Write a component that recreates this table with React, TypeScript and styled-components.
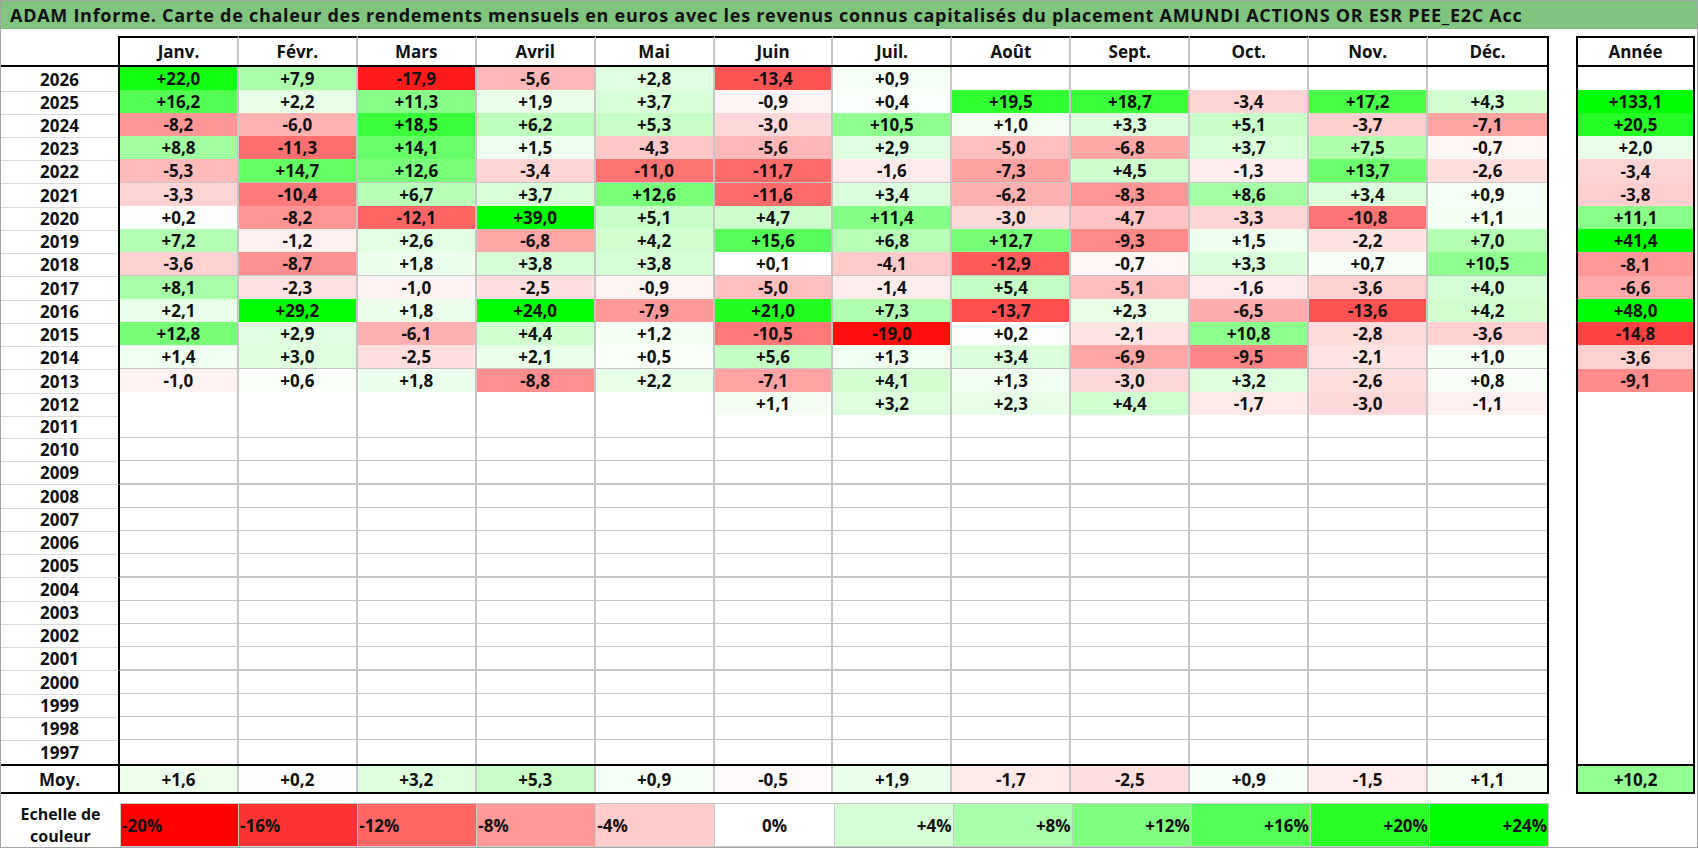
import * as React from "react";
import styled, { createGlobalStyle } from "styled-components";

const MONTHS = ["Janv.", "Févr.", "Mars", "Avril", "Mai", "Juin", "Juil.", "Août", "Sept.", "Oct.", "Nov.", "Déc."];

type Val = number | null;
const _ = null;

// year -> [12 months, annual]
const DATA: Record<number, [Val[], Val]> = {
	2026: [[22.0, 7.9, -17.9, -5.6, 2.8, -13.4, 0.9, _, _, _, _, _], _],
	2025: [[16.2, 2.2, 11.3, 1.9, 3.7, -0.9, 0.4, 19.5, 18.7, -3.4, 17.2, 4.3], 133.1],
	2024: [[-8.2, -6.0, 18.5, 6.2, 5.3, -3.0, 10.5, 1.0, 3.3, 5.1, -3.7, -7.1], 20.5],
	2023: [[8.8, -11.3, 14.1, 1.5, -4.3, -5.6, 2.9, -5.0, -6.8, 3.7, 7.5, -0.7], 2.0],
	2022: [[-5.3, 14.7, 12.6, -3.4, -11.0, -11.7, -1.6, -7.3, 4.5, -1.3, 13.7, -2.6], -3.4],
	2021: [[-3.3, -10.4, 6.7, 3.7, 12.6, -11.6, 3.4, -6.2, -8.3, 8.6, 3.4, 0.9], -3.8],
	2020: [[0.2, -8.2, -12.1, 39.0, 5.1, 4.7, 11.4, -3.0, -4.7, -3.3, -10.8, 1.1], 11.1],
	2019: [[7.2, -1.2, 2.6, -6.8, 4.2, 15.6, 6.8, 12.7, -9.3, 1.5, -2.2, 7.0], 41.4],
	2018: [[-3.6, -8.7, 1.8, 3.8, 3.8, 0.1, -4.1, -12.9, -0.7, 3.3, 0.7, 10.5], -8.1],
	2017: [[8.1, -2.3, -1.0, -2.5, -0.9, -5.0, -1.4, 5.4, -5.1, -1.6, -3.6, 4.0], -6.6],
	2016: [[2.1, 29.2, 1.8, 24.0, -7.9, 21.0, 7.3, -13.7, 2.3, -6.5, -13.6, 4.2], 48.0],
	2015: [[12.8, 2.9, -6.1, 4.4, 1.2, -10.5, -19.0, 0.2, -2.1, 10.8, -2.8, -3.6], -14.8],
	2014: [[1.4, 3.0, -2.5, 2.1, 0.5, 5.6, 1.3, 3.4, -6.9, -9.5, -2.1, 1.0], -3.6],
	2013: [[-1.0, 0.6, 1.8, -8.8, 2.2, -7.1, 4.1, 1.3, -3.0, 3.2, -2.6, 0.8], -9.1],
	2012: [[_, _, _, _, _, 1.1, 3.2, 2.3, 4.4, -1.7, -3.0, -1.1], _],
};

const AVERAGE: Val[] = [1.6, 0.2, 3.2, 5.3, 0.9, -0.5, 1.9, -1.7, -2.5, 0.9, -1.5, 1.1];
const AVERAGE_YEAR = 10.2;

const YEARS = Array.from({ length: 30 }, (_v, i) => 2026 - i);

// 697px shared by the 30 year rows, kept on whole pixels
const BODY_H = 697;
const rowHeight = (i: number) =>
	Math.floor(((i + 1) * BODY_H) / YEARS.length) - Math.floor((i * BODY_H) / YEARS.length);

const SCALE = [-20, -16, -12, -8, -4, 0, 4, 8, 12, 16, 20, 24];

const heat = (v: Val): string => {
	if (v === null || v === 0) return "#ffffff";
	const t = v < 0 ? Math.min(1, -v / 20) : Math.min(1, v / 24);
	const c = Math.round(255 * (1 - t));
	return v < 0 ? `rgb(255, ${c}, ${c})` : `rgb(${c}, 255, ${c})`;
};

const fmt = (v: Val) => (v === null ? "" : (v >= 0 ? "+" : "") + v.toFixed(1).replace(".", ","));

const GlobalStyle = createGlobalStyle`
	html, body {
		margin: 0;
		padding: 0;
		background: #ffffff;
	}
	body {
		font-family: "Open Sans", "Liberation Sans", sans-serif;
		color: #111111;
	}
	* {
		box-sizing: border-box;
	}
`;

const Frame = styled.div`
	width: 1698px;
	height: 848px;
	border: 1px solid #a3a3a3;
	display: flex;
	flex-direction: column;
`;

const TitleBar = styled.div`
	height: 28px;
	background: #80c480;
	display: flex;
	align-items: center;
	padding-left: 9px;
	font-size: 18px;
	font-weight: 700;
	letter-spacing: 0.72px;
	white-space: nowrap;
`;

const Content = styled.div`
	display: flex;
	align-items: flex-start;
	gap: 27px;
	padding-top: 7px;
`;

const MonthTable = styled.div`
	width: 1548px;
	display: flex;
	flex-direction: column;
`;

const GridRow = styled.div`
	display: grid;
	grid-template-columns: 119px repeat(12, 1fr);
	border-right: 2px solid #000;
	font-size: 17px;
	font-weight: 700;
`;

const HeaderRow = styled(GridRow)`
	height: 31px;
	border-bottom: 2px solid #000;
`;

const DataRow = styled(GridRow)<{ $h: number }>`
	height: ${(p) => p.$h}px;
`;

const AverageRow = styled(GridRow)`
	height: 30px;
	border-top: 2px solid #000;
	border-bottom: 2px solid #000;
`;

const Cell = styled.div`
	display: flex;
	align-items: center;
	justify-content: center;
	white-space: nowrap;
`;

const YearCell = styled(Cell)<{ $last?: boolean }>`
	border-right: 2px solid #000;
	border-bottom: ${(p) => (p.$last ? "none" : "1px solid #dadada")};
`;

const MonthHead = styled(Cell)`
	border-top: 2px solid #000;
	border-right: 2px solid #c6c6c6;
	&:last-child {
		border-right: none;
	}
`;

const ValueCell = styled(Cell)<{ $bg: string; $last?: boolean }>`
	background: ${(p) => p.$bg};
	border-right: 2px solid #c6c6c6;
	border-bottom: ${(p) => (p.$last ? "none" : "2px solid #c6c6c6")};
	&:last-child {
		border-right: none;
	}
`;

const ScaleRow = styled.div`
	display: grid;
	grid-template-columns: 119px repeat(12, 1fr);
	height: 42px;
	margin-top: 9px;
	font-size: 17px;
	font-weight: 700;
`;

const ScaleLabel = styled.div`
	display: flex;
	align-items: center;
	justify-content: center;
	text-align: center;
	line-height: 22px;
	font-size: 16px;
`;

const Swatch = styled.div<{ $bg: string; $align: "flex-start" | "center" | "flex-end" }>`
	display: flex;
	align-items: center;
	justify-content: ${(p) => p.$align};
	padding: 0 1px;
	background: ${(p) => p.$bg};
	border: 1px solid #cbcbcb;
	border-left: none;
	&:nth-child(2) {
		border-left: 1px solid #cbcbcb;
	}
`;

const AnnualTable = styled.div`
	width: 119px;
	display: flex;
	flex-direction: column;
	border-left: 2px solid #000;
	border-right: 2px solid #000;
	font-size: 17px;
	font-weight: 700;
`;

const AnnualHead = styled(Cell)`
	height: 31px;
	border-top: 2px solid #000;
	border-bottom: 2px solid #000;
`;

const AnnualCell = styled(Cell)<{ $bg: string; $h: number }>`
	height: ${(p) => p.$h}px;
	background: ${(p) => p.$bg};
`;

const AnnualAverage = styled(Cell)<{ $bg: string }>`
	height: 30px;
	background: ${(p) => p.$bg};
	border-top: 2px solid #000;
	border-bottom: 2px solid #000;
`;

export default function App() {
	return (
		<>
			<GlobalStyle />
			<Frame>
				<TitleBar>
					ADAM Informe. Carte de chaleur des rendements mensuels en euros avec les revenus connus capitalisés du
					placement AMUNDI ACTIONS OR ESR PEE_E2C Acc
				</TitleBar>
				<Content>
					<MonthTable>
						<HeaderRow>
							<YearCell $last />
							{MONTHS.map((m) => (
								<MonthHead key={m}>{m}</MonthHead>
							))}
						</HeaderRow>
						{YEARS.map((year, i) => {
							const months = DATA[year]?.[0] ?? Array(12).fill(null);
							const last = i === YEARS.length - 1;
							return (
								<DataRow key={year} $h={rowHeight(i)}>
									<YearCell $last={last}>{year}</YearCell>
									{months.map((v, j) => (
										<ValueCell key={j} $bg={heat(v)} $last={last}>
											{fmt(v)}
										</ValueCell>
									))}
								</DataRow>
							);
						})}
						<AverageRow>
							<YearCell $last>Moy.</YearCell>
							{AVERAGE.map((v, j) => (
								<ValueCell key={j} $bg={heat(v)} $last>
									{fmt(v)}
								</ValueCell>
							))}
						</AverageRow>
						<ScaleRow>
							<ScaleLabel>
								Echelle de
								<br />
								couleur
							</ScaleLabel>
							{SCALE.map((s) => (
								<Swatch
									key={s}
									$bg={heat(s)}
									$align={s < 0 ? "flex-start" : s === 0 ? "center" : "flex-end"}
								>
									{(s > 0 ? "+" : "") + s + "%"}
								</Swatch>
							))}
						</ScaleRow>
					</MonthTable>
					<AnnualTable>
						<AnnualHead>Année</AnnualHead>
						{YEARS.map((year, i) => {
							const v = DATA[year]?.[1] ?? null;
							return (
								<AnnualCell key={year} $bg={heat(v)} $h={rowHeight(i)}>
									{fmt(v)}
								</AnnualCell>
							);
						})}
						<AnnualAverage $bg={heat(AVERAGE_YEAR)}>{fmt(AVERAGE_YEAR)}</AnnualAverage>
					</AnnualTable>
				</Content>
			</Frame>
		</>
	);
}
